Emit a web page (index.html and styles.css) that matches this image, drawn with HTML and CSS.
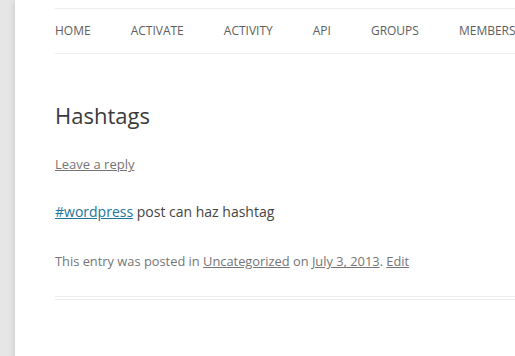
FILE: index.html
```html
<!DOCTYPE html>
<html lang="en">
<head>
    <meta charset="UTF-8">
    <meta name="viewport" content="width=device-width, initial-scale=1.0">
    <title>Hashtags</title>
    <link rel="stylesheet" href="styles.css">
</head>
<body>
    <div class="site">
        <nav class="main-navigation">
            <ul class="nav-menu">
                <li><a href="#">Home</a></li>
                <li><a href="#">Activate</a></li>
                <li><a href="#">Activity</a></li>
                <li><a href="#">API</a></li>
                <li><a href="#">Groups</a></li>
                <li><a href="#">Members</a></li>
            </ul>
        </nav>

        <article class="post">
            <header class="entry-header">
                <h1 class="entry-title">Hashtags</h1>
                <div class="comments-link"><a href="#">Leave a reply</a></div>
            </header>
            <div class="entry-content">
                <p><a class="hashtag" href="#">#wordpress</a> post can haz hashtag</p>
            </div>
            <footer class="entry-meta">
                This entry was posted in <a href="#">Uncategorized</a> on <a href="#">July 3, 2013</a>. <a href="#">Edit</a>
            </footer>
        </article>
    </div>
</body>
</html>
```

FILE: styles.css
```css
html, body {
    overflow: hidden;
}

body {
    margin: 0;
    padding-left: 15px;
    background-color: #e6e6e6;
    font-family: "Open Sans", Helvetica, Arial, sans-serif;
    color: #444;
}

.site {
    width: 960px;
    min-height: 400px;
    padding: 8px 40px 0;
    background-color: #fff;
    box-shadow: 0 2px 6px rgba(100, 100, 100, 0.3);
}

.main-navigation {
    border-top: 1px solid #ededed;
    border-bottom: 1px solid #ededed;
}

.nav-menu {
    display: flex;
    margin: 0;
    padding: 0;
    list-style: none;
}

.nav-menu li {
    margin-right: 40px;
    font-size: 12px;
    line-height: 44px;
    text-transform: uppercase;
    white-space: nowrap;
}

.nav-menu a {
    color: #5e5e5e;
    text-decoration: none;
}

.post {
    margin-top: 48px;
    padding-bottom: 23px;
    border-bottom: 4px double #ededed;
}

.entry-title {
    margin: 0 0 24px;
    font-size: 22px;
    font-weight: normal;
    line-height: 1.2;
    color: #3a3a3a;
}

.comments-link {
    font-size: 13px;
    line-height: 24px;
}

.comments-link a,
.entry-meta a {
    color: #757575;
}

.entry-content {
    margin-top: 24px;
}

.entry-content p {
    margin: 0;
    font-size: 14px;
    line-height: 24px;
}

.hashtag {
    color: #21759b;
}

.entry-meta {
    margin-top: 25px;
    font-size: 12.85px;
    line-height: 24px;
    color: #757575;
}
```
